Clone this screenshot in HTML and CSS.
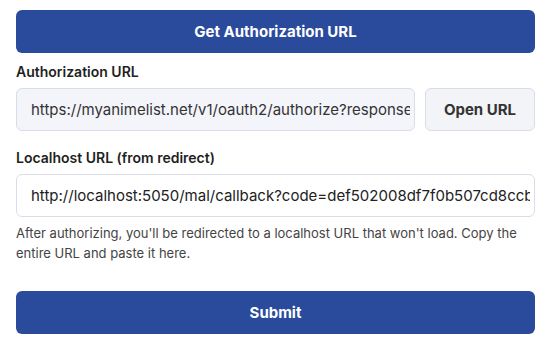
FILE: index.html
```html
<!DOCTYPE html>
<html lang="en">
<head>
  <meta charset="UTF-8" />
  <meta name="viewport" content="width=device-width, initial-scale=1.0"/>
  <title>MyAnimeList Login</title>
  <link rel="stylesheet" href="styles.css">
</head>
<body>

  <div class="auth-panel">
    <button class="btn btn-primary">Get Authorization URL</button>

    <div class="field">
      <label class="field-label" for="authUrl">Authorization URL</label>
      <div class="url-row">
        <input type="text" class="text-input readonly-input" id="authUrl" readonly
          value="https://myanimelist.net/v1/oauth2/authorize?response_type=code&client_id=6114d00ca681b7701d1e15fe11a4987e&code_challenge=abc">
        <button class="btn btn-secondary">Open URL</button>
      </div>
    </div>

    <div class="field">
      <label class="field-label" for="redirectUrl">Localhost URL (from redirect)</label>
      <input type="text" class="text-input" id="redirectUrl"
        value="http://localhost:5050/mal/callback?code=def502008df7f0b507cd8ccb3a1e9c0d4f">
      <p class="help-text">After authorizing, you'll be redirected to a localhost URL that won't load. Copy the entire URL and paste it here.</p>
    </div>

    <button class="btn btn-primary submit-btn">Submit</button>
  </div>

</body>
</html>
```

FILE: styles.css
```css
* {
  margin: 0;
  padding: 0;
  box-sizing: border-box;
  font-family: 'Inter', 'Liberation Sans', sans-serif;
}

body {
  background: #fff;
  color: #1d1d1f;
  padding: 10px 13px 0 16px;
}

.auth-panel {
  display: flex;
  flex-direction: column;
}

.btn {
  border: none;
  border-radius: 6px;
  cursor: pointer;
  font-weight: 700;
}

.btn-primary {
  height: 43px;
  width: 100%;
  background-color: #2a4a9b;
  color: #fff;
  font-size: 15px;
}

.btn-primary:hover {
  background-color: #223f88;
}

.field {
  display: flex;
  flex-direction: column;
  gap: 6px;
  margin-top: 9px;
}

.field + .field {
  margin-top: 17px;
}

.field-label {
  font-size: 14px;
  font-weight: 600;
  line-height: 20px;
  color: #1f1f22;
}

.url-row {
  display: flex;
  gap: 10px;
}

.text-input {
  width: 100%;
  height: 43px;
  padding: 0 4px 0 14px;
  font-size: 15px;
  color: #222;
  background-color: #fff;
  border: 1px solid #dadde8;
  border-radius: 6px;
  outline: none;
}

.readonly-input {
  flex: 1;
  min-width: 0;
  background-color: #f3f5fb;
  color: #333;
}

.btn-secondary {
  flex: 0 0 110px;
  height: 43px;
  background-color: #f3f4f8;
  border: 1px solid #dadde8;
  color: #333;
  font-size: 15px;
}

.btn-secondary:hover {
  background-color: #e8eaf1;
}

.help-text {
  font-size: 13px;
  line-height: 20px;
  color: #444;
}

.submit-btn {
  margin-top: 28px;
}
```
